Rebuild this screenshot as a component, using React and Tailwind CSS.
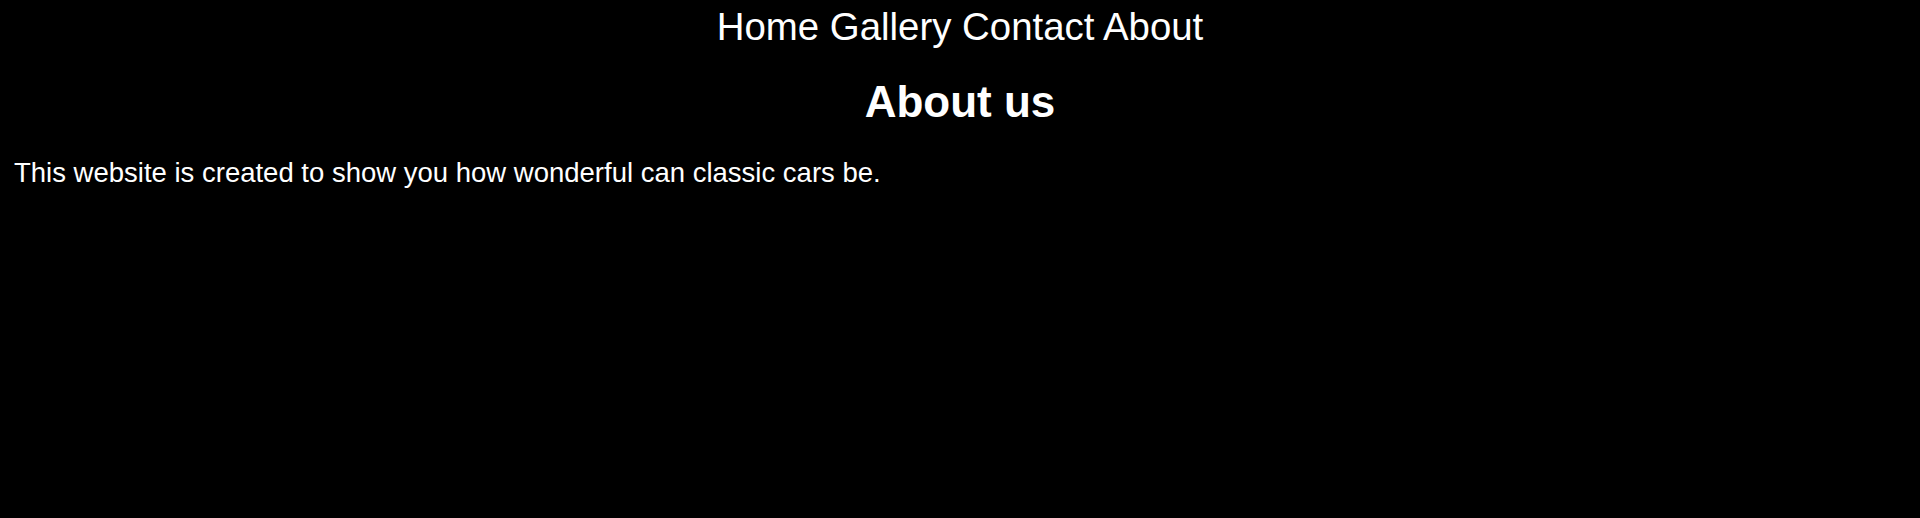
export default function App() {
  return (
    <div className="min-h-screen bg-black text-white px-[14px] pt-[8px] font-['Liberation_Sans',Arial,sans-serif]">
      {/* Nav */}
      <nav className="text-center text-[38.4px] leading-none">
        <a href="#">Home</a> <a href="#">Gallery</a> <a href="#">Contact</a> <a href="#">About</a>
      </nav>

      <h1 className="mt-[34px] text-center text-[44px] font-bold leading-none">About us</h1>

      <p className="mt-[35px] text-[27.5px] leading-none">
        This website is created to show you how wonderful can classic cars be.
      </p>
    </div>
  );
}
